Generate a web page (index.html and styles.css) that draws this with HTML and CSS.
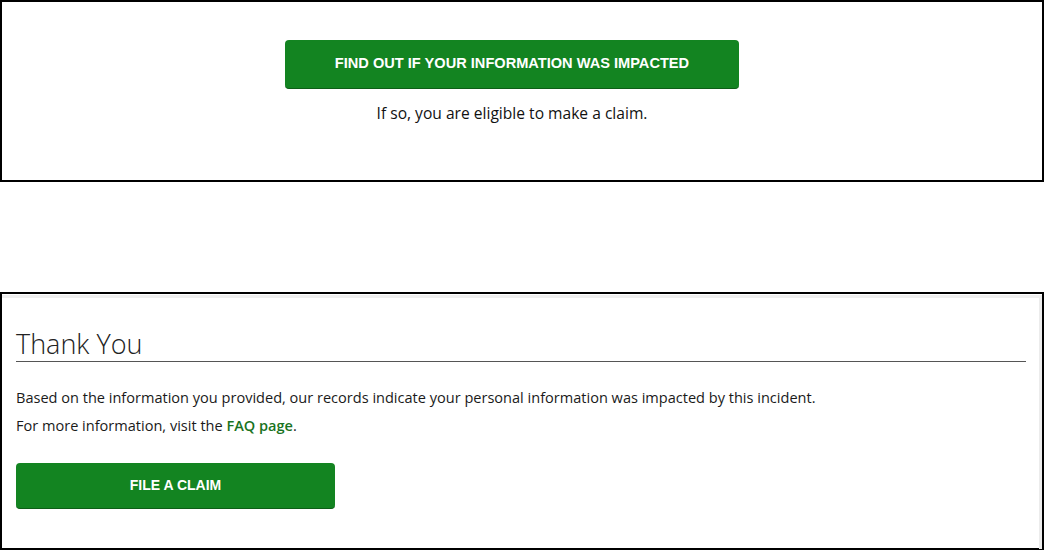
FILE: index.html
```html
<!DOCTYPE html>
<html lang="en">
<head>
	<meta http-equiv="Content-Type" content="text/html; charset=UTF-8">
	<meta name="viewport" content="width=device-width, initial-scale=1">
	<title>Thank You</title>
	<link rel="stylesheet" href="styles.css">
</head>
<body>
<main>
  <section class="check-box">
    <a class="btn btn-wide" href="#">FIND OUT IF YOUR INFORMATION WAS IMPACTED</a>
    <p class="check-note">If so, you are eligible to make a claim.</p>
  </section>

  <section class="result-box">
    <div class="result-panel">
      <h1 class="result-title">Thank You</h1>
      <p class="result-text">Based on the information you provided, our records indicate your personal information was impacted by this incident.</p>
      <p class="result-text">For more information, visit the <a class="faq-link" href="#">FAQ page</a>.</p>
      <a class="btn btn-claim" href="#">FILE A CLAIM</a>
    </div>
  </section>
</main>
</body>
</html>
```

FILE: styles.css
```css
html,
body {
  width: 100%;
  height: 100%;
}
body {
  margin: 0;
  background: #fff;
  font-family: "Open Sans", "Liberation Sans", sans-serif;
  color: #1a1a1a;
}
.check-box {
  box-sizing: border-box;
  height: 182px;
  border: 2px solid #000;
  padding: 38px 20px 0 0;
  display: flex;
  flex-direction: column;
  align-items: center;
}
.btn {
  display: flex;
  align-items: center;
  justify-content: center;
  box-sizing: border-box;
  background-color: #138421;
  color: #fff;
  font-family: "Liberation Sans", Arial, sans-serif;
  font-weight: bold;
  text-decoration: none;
  border-radius: 4px;
  border-bottom: 1px solid #0d5e17;
  padding-bottom: 2px;
}
.btn-wide {
  width: 454px;
  height: 49px;
  font-size: 14.6px;
}
.check-note {
  margin: 14px 0 0;
  font-size: 15.6px;
  line-height: 20px;
  color: #111;
}
.result-box {
  margin-top: 110px;
  box-sizing: border-box;
  height: 258px;
  border: 2px solid #000;
}
.result-panel {
  box-sizing: border-box;
  height: 100%;
  border-top: 3px solid #efefef;
  border-right: 3px solid #ececec;
  margin-top: 1px;
  padding: 0 13px 0 14px;
}
.result-title {
  margin: 30px 0 21px;
  padding-bottom: 1px;
  border-bottom: 1px solid #555;
  font-size: 27px;
  font-weight: 300;
  line-height: 32px;
  color: #222;
}
.result-text {
  margin: 0;
  font-size: 14.55px;
  line-height: 28px;
  color: #1a1a1a;
}
.faq-link {
  color: #1a7322;
  font-weight: 600;
  text-decoration: none;
}
.btn-claim {
  margin-top: 24px;
  width: 319px;
  height: 46px;
  font-size: 14px;
}
```
